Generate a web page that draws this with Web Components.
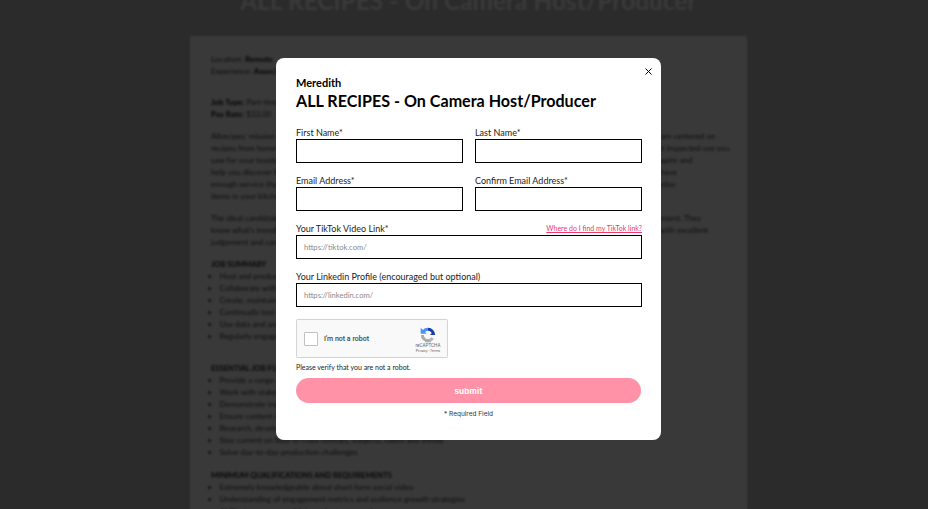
<!DOCTYPE html>
<html lang="en">
<head>
<meta charset="utf-8">
<title>ALL RECIPES - On Camera Host/Producer</title>
<style>
  html, body { margin: 0; height: 100%; overflow: hidden; background: #bfbfbf; }
  body { font-family: Lato, "Liberation Sans", sans-serif; }
</style>
</head>
<body>
<job-page>
  <span slot="title">ALL RECIPES - On Camera Host/Producer</span>
  <job-meta>Location: <b>Remote</b></job-meta>
  <job-meta>Experience: <b>Associate</b></job-meta>
  <job-meta top="19"><b>Job Type:</b> Part-time</job-meta>
  <job-meta><b>Pay Rate:</b> $33.00</job-meta>
  <job-para>
    <div>Allrecipes' mission is to help home cooks of all levels find, share and make the very best food, with a widely trusted content program centered on</div>
    <div>recipes from home cooks everywhere, reviewed and rated by a community of people who have tested them all, and the very latest inspected use you</div>
    <div>saw for your toaster oven, the tips you need for your air fryer and a whole lot more than just that, every day. Our overall goal is inspire and</div>
    <div>help you discover food that is truly delicious, affordable, weeknight friendly and easy, along with a range of new recipes that also have</div>
    <div>enough service that you can trust them, along with plenty of clever and creative new ways, tips and other great ideas to use everyday</div>
    <div>items in your kitchen when you want to make mealtime a little easier.</div>
  </job-para>
  <job-para>
    <div>The ideal candidate is passionate about food and truly understands the wide world of short form social media, video and other content. They</div>
    <div>know what's trending and how to make it work for a food brand, and they are a skilled, creative and natural on camera presenter with excellent</div>
    <div>judgement and camera presence, comfortable in front of any audience.</div>
  </job-para>
  <job-list heading="JOB SUMMARY">
    <li>Host and produce short form recipe videos on camera for our social channels</li>
    <li>Collaborate with editors and food stylists on new formats and recipe stories</li>
    <li>Create, maintain and publish a content calendar across all platforms</li>
    <li>Continually test new ideas and formats to grow the brand's audience</li>
    <li>Use data and analytics to inform what gets filmed next</li>
    <li>Regularly engage with followers and the wider food creator community</li>
  </job-list>
  <job-list heading="ESSENTIAL JOB FUNCTIONS" top="20">
    <li>Provide a range of creative ideas for video shoots</li>
    <li>Work with stakeholders to plan and deliver content on time</li>
    <li>Demonstrate insight into the food and cooking audience</li>
    <li>Ensure content is accurate and on brand</li>
    <li>Research, develop and test recipes for camera</li>
    <li>Stay current on best-in-class formats, subjects, talent and trends</li>
    <li>Solve day-to-day production challenges</li>
  </job-list>
  <job-list heading="MINIMUM QUALIFICATIONS AND REQUIREMENTS" top="11">
    <li>Extremely knowledgeable about short form social video</li>
    <li>Understanding of engagement metrics and audience growth strategies</li>
    <li>Ability to manage multiple projects at one time</li>
  </job-list>
</job-page>

<apply-modal>
  <span slot="company">Meredith</span>
  <span slot="title">ALL RECIPES - On Camera Host/Producer</span>
  <form-field label="First Name*"></form-field>
  <form-field label="Last Name*"></form-field>
  <form-field label="Email Address*"></form-field>
  <form-field label="Confirm Email Address*"></form-field>
  <form-field wide label="Your TikTok Video Link*" hint="Where do I find my TikTok link?" placeholder="https://tiktok.com/"></form-field>
  <form-field wide label="Your Linkedin Profile (encouraged but optional)" placeholder="https://linkedin.com/"></form-field>
</apply-modal>

<script>
class JobPage extends HTMLElement {
  constructor () {
    super();
    this.attachShadow({ mode: 'open' }).innerHTML = `
      <style>
        :host { display: flex; flex-direction: column; align-items: center; padding-left: 9px; }
        h1 {
          margin: -13px 0 0;
          height: 49px;
          font: 700 24.300px/28px Lato, sans-serif;
          letter-spacing: .1px;
          color: #fff;
          white-space: nowrap;
        }
        .panel {
          box-sizing: border-box;
          width: 557px;
          min-height: 600px;
          padding: 17px 21px;
          background: #fff;
          border-radius: 2px;
          font: 8px/12px Lato, sans-serif;
          color: #444;
        }
      </style>
      <h1><slot name="title"></slot></h1>
      <div class="panel"><slot></slot></div>
    `;
  }
}

class JobMeta extends HTMLElement {
  constructor () {
    super();
    this.attachShadow({ mode: 'open' }).innerHTML = `
      <style>
        :host { display: block; white-space: nowrap; }
        ::slotted(b) { color: #111; }
      </style>
      <slot></slot>
    `;
  }
  connectedCallback () {
    this.style.marginTop = (this.getAttribute('top') || 0) + 'px';
  }
}

class JobPara extends HTMLElement {
  constructor () {
    super();
    this.attachShadow({ mode: 'open' }).innerHTML = `
      <style>:host { display: block; margin-top: 10px; white-space: nowrap; }</style>
      <slot></slot>
    `;
  }
}

class JobList extends HTMLElement {
  constructor () {
    super();
    this.attachShadow({ mode: 'open' }).innerHTML = `
      <style>
        :host { display: block; margin-top: 10px; white-space: nowrap; }
        h4 { margin: 0; font: 700 7.600px/12px Lato, sans-serif; color: #222; }
        ul { margin: 0; padding: 0 0 0 8.5px; }
      </style>
      <h4></h4>
      <ul><slot></slot></ul>
    `;
  }
  connectedCallback () {
    this.shadowRoot.querySelector('h4').textContent = this.getAttribute('heading');
    if (this.hasAttribute('top')) this.style.marginTop = this.getAttribute('top') + 'px';
  }
}

class ApplyModal extends HTMLElement {
  constructor () {
    super();
    this.attachShadow({ mode: 'open' }).innerHTML = `
      <style>
        :host {
          position: fixed;
          inset: 0;
          display: block;
          background: rgba(0, 0, 0, .775);
          backdrop-filter: blur(.8px);
          font-family: Lato, sans-serif;
        }
        .dialog {
          position: absolute;
          left: 276px;
          top: 58px;
          box-sizing: border-box;
          width: 385px;
          height: 382px;
          padding: 18px 20px 0;
          background: #fff;
          border-radius: 8px;
          color: #000;
        }
        .close { position: absolute; right: 9px; top: 10px; width: 7px; height: 7px; display: flex; }
        .company { font: 700 11px/13px Lato, sans-serif; }
        h2 { margin: 2px 0 0; font: 700 16.100px/20px Lato, sans-serif; white-space: nowrap; }
        .grid {
          display: grid;
          grid-template-columns: 167px 167px;
          column-gap: 12px;
          row-gap: 12px;
          margin-top: 16px;
        }
      </style>
      <div class="dialog">
        <svg class="close" viewBox="0 0 7 7" aria-hidden="true"><path d="M.5.5l6 6M6.5.5l-6 6" stroke="#000" stroke-width="1" fill="none"/></svg>
        <div class="company"><slot name="company"></slot></div>
        <h2><slot name="title"></slot></h2>
        <div class="grid"><slot></slot></div>
        <captcha-box></captcha-box>
        <submit-bar></submit-bar>
      </div>
    `;
  }
}

class FormField extends HTMLElement {
  constructor () {
    super();
    this.attachShadow({ mode: 'open' }).innerHTML = `
      <style>
        :host { display: block; min-width: 0; }
        :host([wide]) { grid-column: 1 / -1; }
        .top { display: flex; justify-content: space-between; align-items: center; box-sizing: border-box; height: 12px; padding-bottom: 2px; font-size: 9px; color: #222; white-space: nowrap; }
        a { font-size: 7px; color: #f0386b; text-decoration: underline; }
        input {
          display: block;
          box-sizing: border-box;
          width: 100%;
          height: 24px;
          margin: 0;
          padding: 0 7px;
          border: 1px solid #000;
          border-radius: 0;
          outline: 0;
          background: #fff;
          font: 7.600px Lato, sans-serif;
        }
        input::placeholder { color: #8a8a8a; opacity: 1; }
      </style>
      <div class="top"><label></label><a href="#"></a></div>
      <input type="text">
    `;
  }
  connectedCallback () {
    const root = this.shadowRoot;
    root.querySelector('label').textContent = this.getAttribute('label');
    const link = root.querySelector('a');
    if (this.hasAttribute('hint')) link.textContent = this.getAttribute('hint');
    else link.remove();
    root.querySelector('input').placeholder = this.getAttribute('placeholder') || '';
  }
}

class CaptchaBox extends HTMLElement {
  constructor () {
    super();
    this.attachShadow({ mode: 'open' }).innerHTML = `
      <style>
        :host { display: block; margin-top: 12px; font-family: Roboto, sans-serif; color: #000; }
        .box {
          box-sizing: border-box;
          width: 152px;
          height: 39px;
          padding: 0 4px 0 7px;
          display: flex;
          align-items: center;
          background: #f9f9f9;
          border: 1px solid #d3d3d3;
          border-radius: 1.5px;
        }
        .check { width: 14px; height: 14px; box-sizing: border-box; background: #fff; border: 1px solid #c1c1c1; border-radius: 1px; }
        .text { margin-left: 6px; font-size: 7px; font-weight: 500; flex: 1; color: #444; }
        .brand { display: flex; flex-direction: column; align-items: center; width: 30px; margin-top: 4px; }
        svg { width: 16px; height: 16px; }
        .name { font-size: 4.6px; line-height: 6px; color: #666; }
        .terms { font-size: 3.6px; line-height: 5px; color: #666; white-space: nowrap; }
        p { margin: 5px 0 0; font: 7px/9px Lato, sans-serif; color: #222; }
      </style>
      <div class="box">
        <div class="check"></div>
        <div class="text">I'm not a robot</div>
        <div class="brand">
          <svg viewBox="0 0 24 24" aria-hidden="true" fill="none" stroke-width="4.5">
            <path d="M12 3.500a8.500 8.500 0 0 1 8.500 8.500" stroke="#1c3aa9"/>
            <path d="M4.800 7.500A8.500 8.500 0 0 1 12 3.500" stroke="#4a90f5"/>
            <path d="M3.500 12a8.500 8.500 0 0 0 8.500 8.500" stroke="#ababab"/>
            <path d="M12 20.500a8.500 8.500 0 0 0 7-3.700" stroke="#b5b5b5"/>
            <path d="M1 1v9h9z" fill="#4a90f5"/>
            <path d="M23 12h-8l4-4z" fill="#1c3aa9"/>
            <path d="M7 23l5-5 5 5z" fill="#ababab"/>
          </svg>
          <div class="name">reCAPTCHA</div>
          <div class="terms">Privacy - Terms</div>
        </div>
      </div>
      <p>Please verify that you are not a robot.</p>
    `;
  }
}

class SubmitBar extends HTMLElement {
  constructor () {
    super();
    this.attachShadow({ mode: 'open' }).innerHTML = `
      <style>
        :host { display: block; margin-top: 6px; text-align: center; }
        button {
          display: block;
          width: 100%;
          height: 25px;
          padding: 0;
          border: 0;
          border-radius: 13px;
          background: #ff92a6;
          color: #fff;
          font: 700 8px Inter, sans-serif;
          letter-spacing: .2px;
        }
        p { margin: 7px 0 0; font: 6.500px/9px Inter, sans-serif; color: #333; }
      </style>
      <button type="button">submit</button>
      <p>* Required Field</p>
    `;
  }
}

customElements.define('job-page', JobPage);
customElements.define('job-meta', JobMeta);
customElements.define('job-para', JobPara);
customElements.define('job-list', JobList);
customElements.define('apply-modal', ApplyModal);
customElements.define('form-field', FormField);
customElements.define('captcha-box', CaptchaBox);
customElements.define('submit-bar', SubmitBar);
</script>
</body>
</html>
